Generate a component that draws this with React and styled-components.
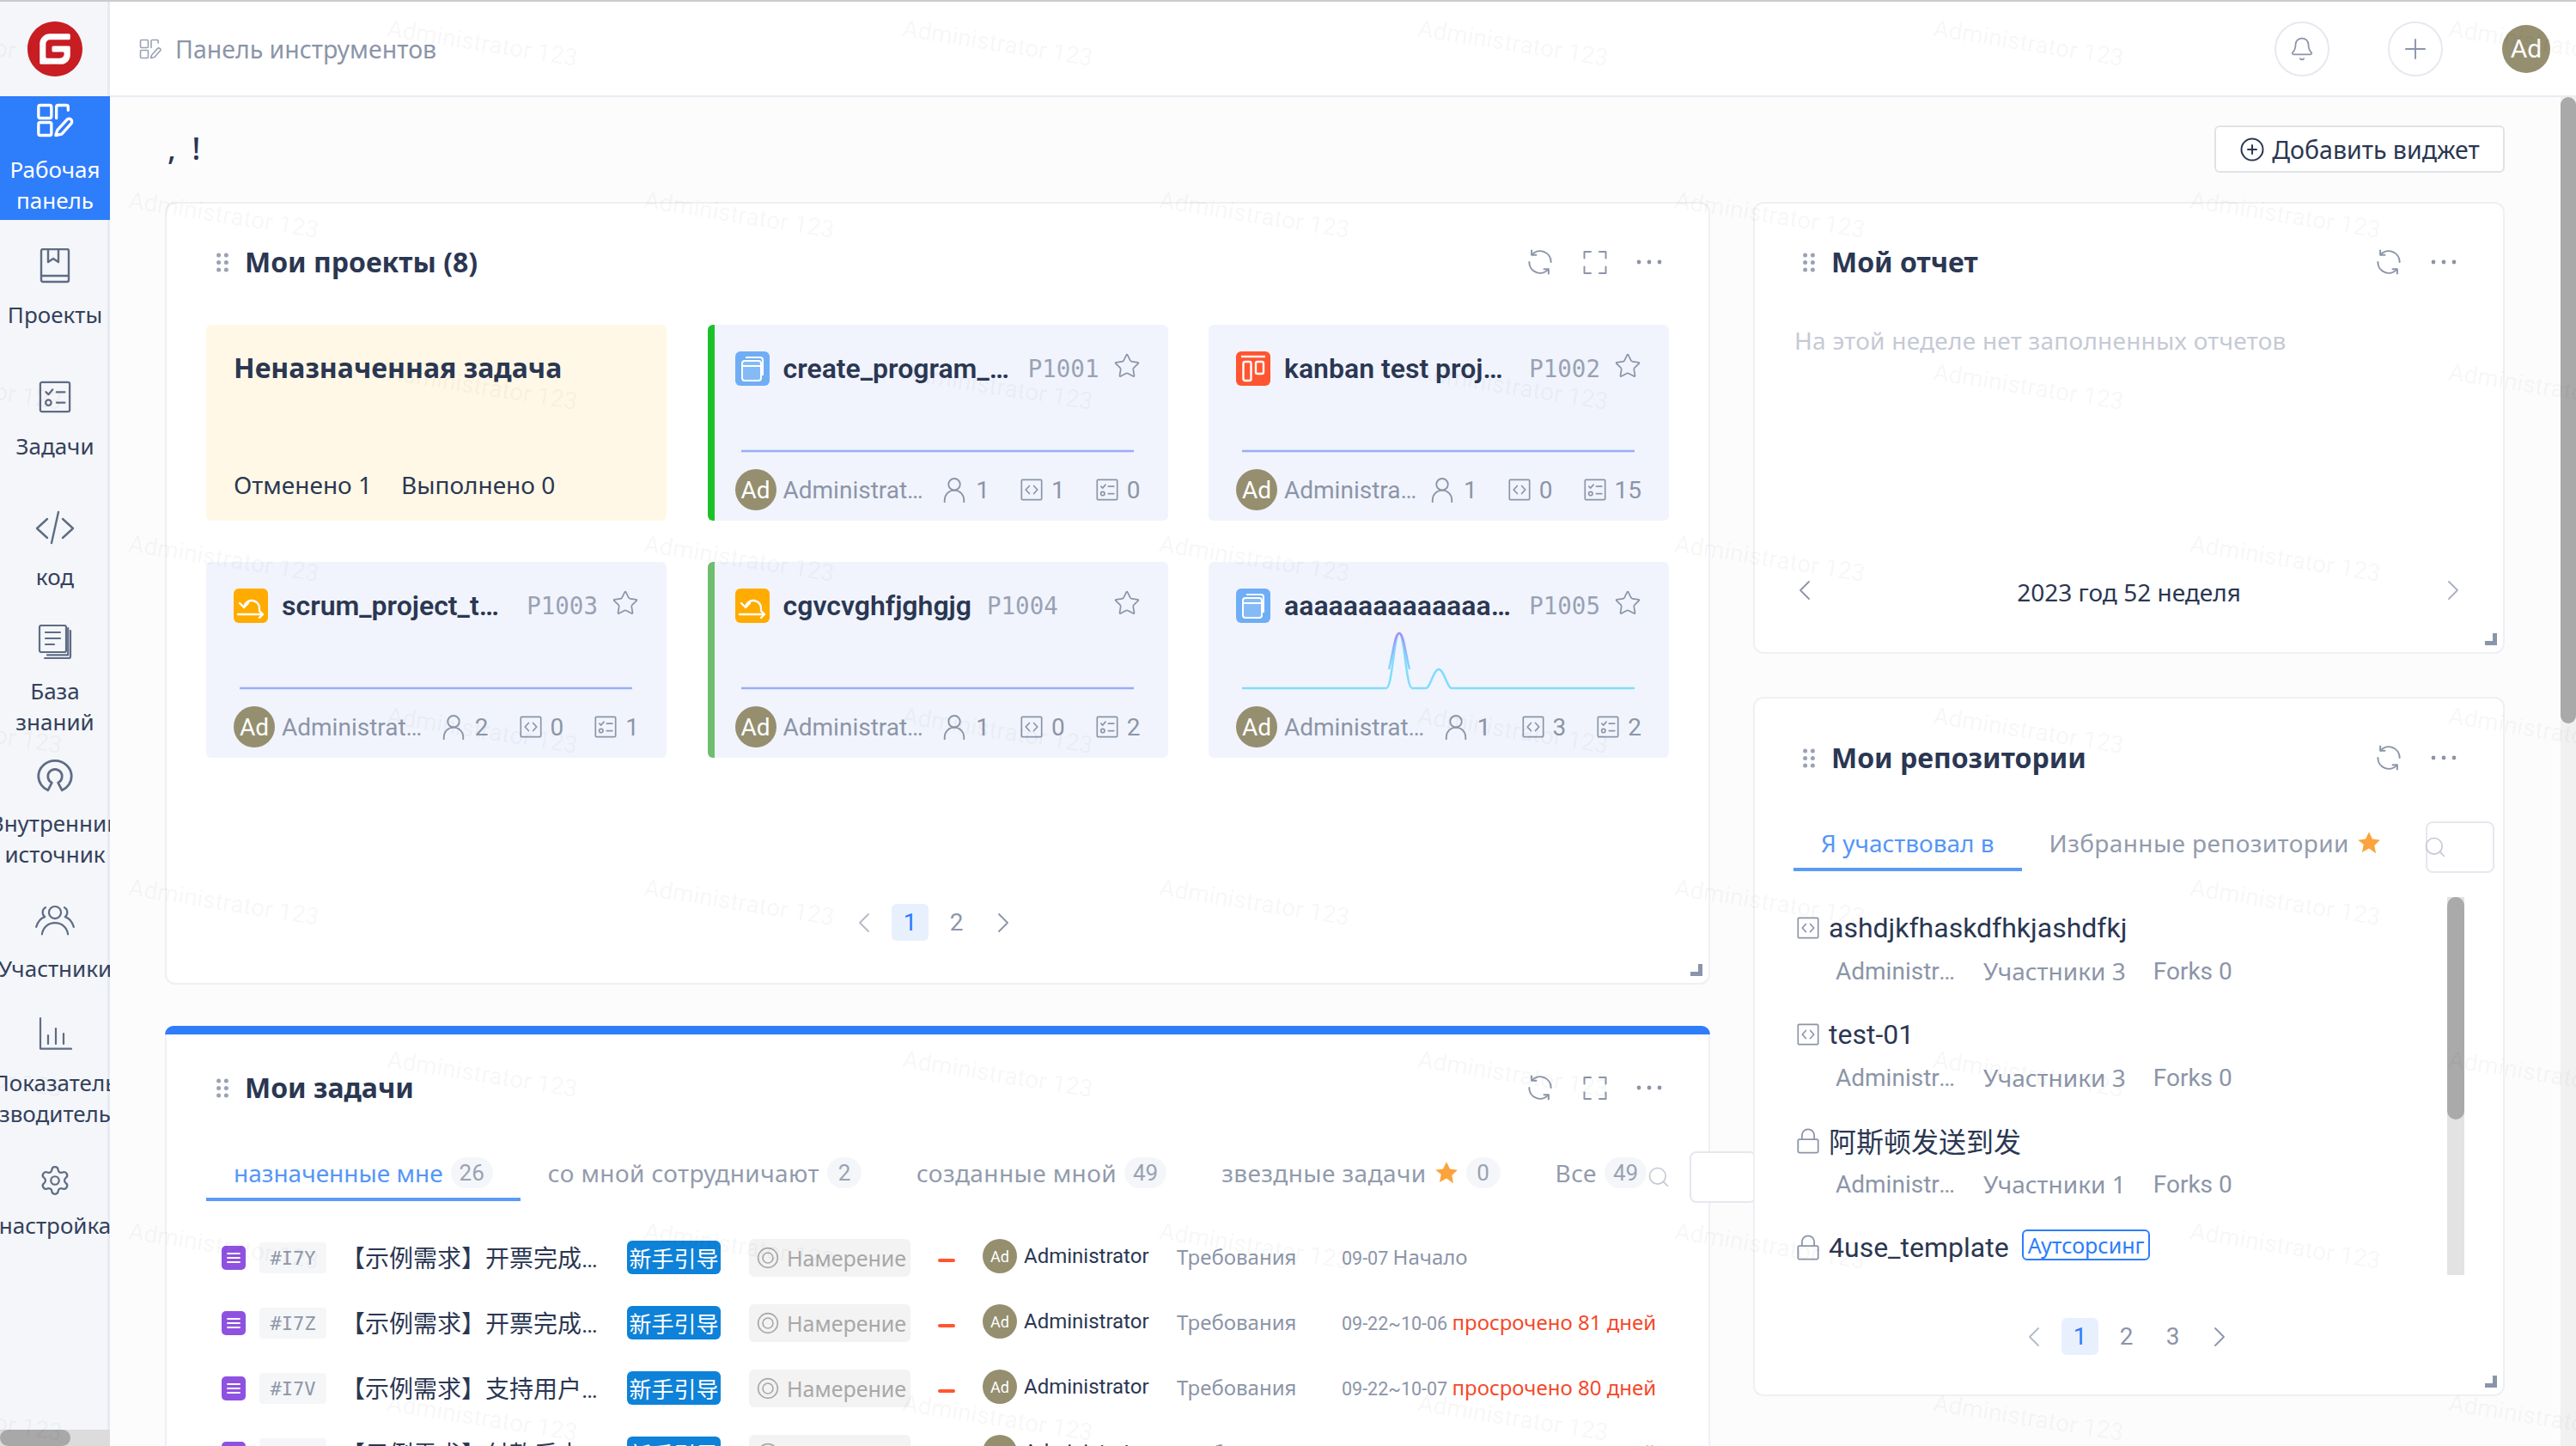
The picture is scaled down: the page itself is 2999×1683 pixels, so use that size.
import React from 'react';
import styled, { createGlobalStyle } from 'styled-components';
import { Settings, Bell, Plus, Star, Search, ChevronLeft, ChevronRight, CirclePlus } from 'lucide-react';

const FONT = `"Noto Sans", Roboto, "Noto Sans CJK SC", sans-serif`;
const LATIN = `Roboto, "Noto Sans", "Noto Sans CJK SC", sans-serif`;
const MONO = `"DejaVu Sans Mono", "Liberation Mono", monospace`;
const INK = '#2b3752';
const MUTED = '#8c95a8';
const BLUE = '#2e7dfb';

const Global = createGlobalStyle`
  html, body { margin: 0; padding: 0; background: #fcfcfd; }
  * { box-sizing: border-box; }
  body { font-family: ${FONT}; color: ${INK}; }
`;

const Root = styled.div`
  position: relative; width: 2999px; height: 1683px; overflow: hidden;
  display: flex; flex-direction: column; background: #fcfcfd;
`;
const TopLine = styled.div`height: 2px; background: #c9cbcd; flex: none;`;
const Body = styled.div`flex: 1; display: flex; min-height: 0;`;

/* Sidebar */
const Sidebar = styled.nav`
  position: relative; width: 128px; flex: none; background: #f4f6f9;
  border-right: 3px solid #e6ebf3; display: flex; flex-direction: column;
`;
const LogoBox = styled.div`
  height: 110px; margin-right: -3px; flex: none; display: flex; align-items: center; justify-content: center;
`;
const NavItem = styled.div`
  flex: none; width: 128px; margin-top: ${p => p.$mt || 0}px; overflow: hidden;
  display: flex; flex-direction: column; align-items: center;
  color: ${p => (p.$active ? '#fff' : '#34415c')};
  background: ${p => (p.$active ? BLUE : 'transparent')};
  padding: ${p => (p.$active ? '8px 0 3px' : '0')};
`;
const NavIcon = styled.div`
  height: 40px; display: flex; align-items: center; justify-content: center;
  color: ${p => (p.$active ? '#fff' : '#5f6c85')};
`;
const NavLabel = styled.div`
  margin: ${p => (p.$tight ? '14px 0 7px' : '19px 0 2px')}; width: 128px; font-size: 26px; line-height: 36px;
  white-space: nowrap; display: flex; flex-direction: column; align-items: center;
  span { display: block; }
`;
const HBar = styled.div`
  position: absolute; left: 0; right: -3px; bottom: 0; height: 19px; background: #dcdcdc;
`;
const HThumb = styled.div`width: 82px; height: 19px; border-radius: 10px; background: #a8a8a8;`;

/* Header */
const Main = styled.div`flex: 1; min-width: 0; display: flex; flex-direction: column;`;
const Header = styled.header`
  height: 111px; flex: none; background: #fff; border-bottom: 2px solid #e8ecf2;
  display: flex; align-items: center; padding: 0 30px 0 34px;
`;
const Crumb = styled.div`
  display: flex; align-items: center; gap: 16px; font-size: 28.5px; color: ${MUTED};
`;
const CrumbIcon = styled.span`display: flex; color: #9aa2b3;`;
const HeaderRight = styled.div`margin-left: auto; display: flex; align-items: center;`;
const RoundBtn = styled.div`
  width: 64px; height: 64px; border-radius: 50%; border: 2px solid #e5e9f0; margin-right: ${p => p.$mr}px;
  display: flex; align-items: center; justify-content: center; color: ${MUTED};
`;
const Avatar = styled.div`
  width: ${p => p.$s}px; height: ${p => p.$s}px; border-radius: 50%; background: #958f70; color: #fff; flex: none;
  font-family: ${LATIN};
  display: flex; align-items: center; justify-content: center; font-size: ${p => p.$f}px;
`;

/* Page */
const Scroller = styled.div`flex: 1; min-height: 0; display: flex;`;
const Content = styled.main`
  flex: 1; min-width: 0; padding: 33px 65px 0 64px; display: flex; flex-direction: column;
`;
const VScroll = styled.div`width: 18px; flex: none; background: #f1f1f1;`;
const VThumb = styled.div`height: 729px; border-radius: 9px; background: #a9a9a9;`;

const Toolbar = styled.div`height: 55px; flex: none; margin-bottom: 34px; display: flex; align-items: center; justify-content: space-between;`;
const Greeting = styled.div`font-size: 36px; font-weight: 500; white-space: pre; padding-left: 3px; margin-top: -2px;`;
const AddBtn = styled.div`
  width: 338px; height: 55px; border: 2px solid #dfe3e8; border-radius: 6px; background: #fff;
  display: flex; align-items: center; justify-content: center; gap: 8px; font-size: 28.5px; color: ${INK};
`;
const Columns = styled.div`display: flex; gap: 50px; align-items: flex-start;`;
const LeftCol = styled.div`width: 1799px; flex: none; display: flex; flex-direction: column; gap: 48px;`;
const RightCol = styled.div`width: 875px; flex: none; display: flex; flex-direction: column; gap: 50px;`;

const Card = styled.section`
  position: relative; height: ${p => p.$h}px; background: #fff; border: 2px solid #eef0f4; border-radius: 12px;
  display: flex; flex-direction: column;
  ${p => p.$accent ? `&::before { content: ''; position: absolute; left: -2px; right: -2px; top: -2px; height: 10px; background: ${BLUE}; border-radius: 10px 10px 0 0; }` : ''}
`;
const CardHead = styled.div`
  height: 60px; flex: none; margin-top: ${p => p.$mt}px; padding: 0 54px 0 ${p => p.$pl || 56}px;
  display: flex; align-items: center;
`;
const CardTitle = styled.h2`margin: -2px 0 0 19px; font-size: 32px; font-weight: 700; color: ${INK};`;
const HeadTools = styled.div`margin-left: auto; display: flex; align-items: center; gap: 33px; color: ${MUTED};`;
const Corner = styled.div`
  position: absolute; right: 7px; bottom: 8px; width: 14px; height: 14px;
  &::before { content: ''; position: absolute; left: 0; right: 0; bottom: 0; height: 5px; background: #8a95a9; }
  &::after { content: ''; position: absolute; top: 0; bottom: 0; right: 0; width: 5px; background: #8a95a9; }
`;

/* Projects */
const ProjectGrid = styled.div`
  margin: 43px 46px 0 46px; display: grid; grid-template-columns: repeat(3, 536px); grid-auto-rows: 228px;
  column-gap: 47.5px; row-gap: 48px;
`;
const ProjectCard = styled.div`
  background: #f1f4fd; border-radius: 6px; padding: 31px 16px 0 ${p => (p.$bar ? 24 : 32)}px;
  border-left: ${p => (p.$bar ? `8px solid ${p.$bar}` : 'none')};
  display: flex; flex-direction: column; font-family: ${LATIN};
`;
const ProjHead = styled.div`height: 40px; display: flex; align-items: center;`;
const ProjIcon = styled.div`
  width: 40px; height: 40px; border-radius: 6px; background: ${p => p.$bg}; flex: none;
  display: flex; align-items: center; justify-content: center; margin-right: 16px;
`;
const ProjName = styled.div`
  flex: 0 1 auto; min-width: 0; font-size: 32px; font-weight: 600; color: ${INK};
  white-space: nowrap; overflow: hidden; text-overflow: ellipsis;
`;
const ProjCode = styled.div`flex: none; margin-left: 18px; font-family: ${MONO}; font-size: 27.5px; color: #99a2b4;`;
const ProjStar = styled.div`flex: none; margin-left: auto; padding-left: 16px; padding-right: 16px; display: flex; color: #8c95a8; margin-top: -6px;`;
const Spark = styled.svg`display: block; margin: 4px 0 0 7px; width: 457px; height: 74px; flex: none; overflow: visible;`;
const ProjFoot = styled.div`margin-top: 19px; height: 48px; display: flex; align-items: center; color: ${MUTED}; font-size: 28px; padding-right: 16px;`;
const OwnerName = styled.div`flex: 1 1 0; min-width: 0; margin: 0 14px 0 8px; white-space: nowrap; overflow: hidden; text-overflow: ellipsis;`;
const Stat = styled.div`flex: none; display: flex; align-items: center; gap: 10px; margin-left: ${p => p.$ml || 0}px;`;

const UnassignedCard = styled.div`
  background: #fff8e6; border-radius: 6px; padding: 30px 32px 0; display: flex; flex-direction: column;
`;
const UnTitle = styled.div`font-size: 32px; font-weight: 700; color: ${INK}; line-height: 40px;`;
const UnFoot = styled.div`margin-top: auto; margin-bottom: 22px; display: flex; gap: 34px; font-size: 28px; line-height: 40px; color: ${INK};`;

const Pager = styled.div`
  margin-top: ${p => p.$mt}px; margin-left: ${p => p.$ml || 0}px; display: flex; justify-content: center; gap: ${p => p.$gap || 11}px; flex: none;
  font-family: ${LATIN};
`;
const PageItem = styled.div`
  width: 43px; height: 43px; border-radius: 6px; display: flex; align-items: center; justify-content: center;
  font-size: 28px; color: ${p => (p.$active ? BLUE : p.$off ? '#b4bac7' : MUTED)};
  background: ${p => (p.$active ? '#e8f0fe' : 'transparent')};
`;

/* Tabs */
const Tabs = styled.div`
  flex: none; display: flex; align-items: flex-start; margin-top: 44px; margin-left: ${p => p.$ml}px; padding-right: ${p => p.$pr || 0}px;
`;
const Tab = styled.div`
  flex: none; height: 58px; padding: 0 ${p => p.$pr ?? 32}px 4px 32px; display: flex; align-items: center; gap: 9px;
  font-size: 28px; white-space: nowrap; letter-spacing: ${p => (p.$active ? 0 : '0.4px')};
  color: ${p => (p.$active ? '#5596f7' : '#929bad')};
  border-bottom: 4px solid ${p => (p.$active ? '#5b9bf8' : 'transparent')};
`;
const Count = styled.span`
  min-width: 40px; height: 36px; padding: 0 10px; border-radius: 18px; background: #f4f6fa; color: #9aa2b3;
  display: inline-flex; align-items: center; justify-content: center; font-size: 26px; font-family: ${LATIN}; letter-spacing: 0;
`;
const SearchBox = styled.div`
  position: relative; flex: none; width: ${p => p.$w}px; height: 60px; margin-left: ${p => p.$ml}; background: #fff;
  border: 2px solid #e5e8ee; border-radius: 8px;
`;
const SearchGlyph = styled.div`
  position: absolute; left: -5px; top: 14px; color: #c3c8d2; display: flex;
`;
const TabSearchGlyph = styled.div`flex: none; display: flex; color: #c3c8d2; margin: 16px 0 0 0; width: 50px;`;

/* Task rows */
const TaskList = styled.div`margin-top: 26px; padding-left: 64px;`;
const TaskRow = styled.div`height: 76px; display: flex; align-items: center;`;
const TypeIcon = styled.div`
  width: 28px; height: 28px; flex: none; border-radius: 5px; background: #8f51e0; color: #fff;
  display: flex; align-items: center; justify-content: center;
`;
const TaskCode = styled.div`
  width: 78px; height: 36px; flex: none; margin-left: 16px; border-radius: 4px; background: #f5f6f8;
  font-family: ${MONO}; font-size: 22px; color: #8f97a8; display: flex; align-items: center; justify-content: center;
`;
const TaskTitle = styled.div`
  width: 325px; flex: none; margin: -2px 0 0 17px; font-size: 28px; color: ${INK}; font-family: Roboto, "Noto Sans CJK SC", sans-serif;
  white-space: nowrap; overflow: hidden; text-overflow: ellipsis;
`;
const GuideTag = styled.div`
  width: 109px; height: 39px; flex: none; margin-left: 8px; margin-top: -2px; border-radius: 6px; background: #0e82d8; color: #fff;
  font-size: 26px; font-family: "Noto Sans CJK SC", sans-serif; display: flex; align-items: center; justify-content: center;
`;
const StatusTag = styled.div`
  width: 188px; height: 44px; flex: none; margin-left: 33px; border-radius: 6px; background: #f3f3f3; color: #a8a8a8;
  font-size: 25px; display: flex; align-items: center; gap: 9px; padding-left: 9px; white-space: nowrap;
`;
const PriorityDash = styled.div`width: 20px; height: 4px; flex: none; margin: 6px 0 0 32px; border-radius: 2px; background: #ff5630;`;
const TaskOwner = styled.div`width: 178px; flex: none; margin-left: 8px; font-size: 24px; color: ${INK}; font-family: ${LATIN};`;
const TaskOwnerWrap = styled.div`display: flex; align-items: center; margin-left: 32px; margin-top: -4px; flex: none;`;
const TaskType = styled.div`width: 192px; flex: none; font-size: 24px; color: ${MUTED}; margin-top: -4px; white-space: nowrap;`;
const TaskDate = styled.div`flex: none; font-size: 21.5px; color: ${MUTED}; margin-top: -4px; white-space: pre; font-family: ${LATIN}; display: flex; align-items: baseline;`;
const DateWord = styled.span`font-family: ${FONT}; font-size: 24px;`;
const Late = styled.span`font-family: ${FONT}; font-size: 24px; color: #f5492a;`;

/* Report */
const EmptyText = styled.div`margin: 41px 0 0 46px; font-size: 28px; line-height: 40px; letter-spacing: 0.25px; color: #c5cad5;`;
const ReportFoot = styled.div`
  margin-top: auto; margin-bottom: 50px; padding: 0 50px; height: 40px; display: flex; align-items: center; justify-content: space-between;
  font-size: 28px; color: ${INK};
`;
const ChevronSlot = styled.div`display: flex; color: ${p => (p.$light ? '#a9b0bf' : MUTED)}; margin: -4px -12px 0;`;

/* Repos */
const RepoArea = styled.div`margin: 28px 45px 0 48px; height: 440px; display: flex; flex: none;`;
const RepoList = styled.div`flex: 1; min-width: 0; overflow: hidden; font-family: ${LATIN};`;
const RepoRow = styled.div`height: 124px; padding-top: 16px; flex: none;`;
const RepoName = styled.div`height: 40px; display: flex; align-items: center; gap: 12px; font-size: 32px; color: ${INK}; white-space: nowrap; padding-left: 1px;`;
const RepoIcon = styled.span`display: flex; color: ${MUTED}; margin-right: -1px;`;
const RepoCjk = styled.span`font-family: "Noto Sans CJK SC", sans-serif; margin-top: -2px;`;
const RepoTag = styled.span`
  margin-left: 3px; margin-top: -6px; height: 36px; padding: 0 5px; border: 2px solid ${BLUE}; border-radius: 6px; color: ${BLUE};
  font-size: 25px; display: inline-flex; align-items: center; font-family: ${FONT};
`;
const RepoMeta = styled.div`margin-top: 10px; padding-left: 46px; height: 40px; display: flex; align-items: center; gap: 32px; font-size: 28px; color: ${MUTED}; white-space: nowrap;`;
const RepoOwner = styled.div`width: 142px; margin-right: -2px; overflow: hidden; text-overflow: ellipsis;`;
const RepoMembers = styled.span`font-family: ${FONT};`;
const Track = styled.div`width: 20px; flex: none; background: #e3e3e3;`;
const Thumb = styled.div`height: 259px; border-radius: 10px; background: #aaa;`;

/* Watermark */
const Watermark = styled.div`
  position: absolute; inset: 0; overflow: hidden; pointer-events: none; z-index: 20; padding-top: 14px;
`;
const WmRow = styled.div`
  height: 200px; display: flex; margin-left: ${p => p.$ml}px; width: 4000px;
`;
const WmText = styled.div`
  width: 600px; flex: none; font-family: ${LATIN}; font-size: 28px; line-height: 36px; color: rgba(0, 0, 0, 0.045); white-space: nowrap;
  transform: rotate(9deg); transform-origin: 0 50%;
`;

/* Icons */
const Ico = styled.svg`
  display: block; flex: none; fill: none; stroke: currentColor; stroke-width: ${p => p.$sw || 2};
  stroke-linecap: round; stroke-linejoin: round;
`;
const I = ({ w, h, vb, sw, children }) => (
  <Ico width={w} height={h} viewBox={vb} $sw={sw}>{children}</Ico>
);

const Logo = () => (
  <svg width="64" height="64" viewBox="0 0 1024 1024">
    <circle cx="512" cy="512" r="440" fill="#fff" />
    <path fill="#c71d23" d="M512 1024C229.222 1024 0 794.778 0 512S229.222 0 512 0s512 229.222 512 512-229.222 512-512 512z m259.149-568.883h-290.74a25.293 25.293 0 0 0-25.292 25.293l-0.026 63.206c0 13.952 11.315 25.293 25.267 25.293h177.024c13.978 0 25.293 11.315 25.293 25.267v12.646a75.853 75.853 0 0 1-75.853 75.853h-240.23a25.293 25.293 0 0 1-25.267-25.293V417.203a75.853 75.853 0 0 1 75.827-75.853h353.946a25.293 25.293 0 0 0 25.267-25.292l0.077-63.207a25.293 25.293 0 0 0-25.268-25.293H417.152a189.62 189.62 0 0 0-189.62 189.645V771.15c0 13.977 11.316 25.293 25.294 25.293h372.94a170.65 170.65 0 0 0 170.65-170.65V480.384a25.293 25.293 0 0 0-25.293-25.267z" />
  </svg>
);
const DashIcon = ({ w = 44, h = 40, sw = 2 }) => (
  <I w={w} h={h} vb="0 0 26 24" sw={sw}>
    <rect x="1.5" y="1.5" width="9" height="9" rx="1.2" />
    <rect x="1.5" y="13.5" width="9" height="9" rx="1.2" />
    <path d="M14 10.5V2.7A1.2 1.2 0 0 1 15.2 1.5H21a1.2 1.2 0 0 1 1.2 1.2V5" />
    <path d="M13.5 22.5l4.2-.8 6.6-7.4a2 2 0 0 0-3-2.7L14.6 19z" />
  </I>
);
const BookIcon = () => (
  <I w={36} h={42} vb="0 0 18 21" sw={1.2}>
    <rect x="1" y="1" width="16" height="19" rx="1" />
    <path d="M1 16.5h16M5 1v7.5l3-2 3 2V1" />
  </I>
);
const TasksIcon = ({ s = 38, sw = 1.2 }) => (
  <I w={s} h={s} vb="0 0 20 20" sw={sw}>
    <rect x="1" y="1" width="18" height="18" rx="1" />
    <path d="M4.5 7l1.5 1.5 2.5-3M11 7h5M11 13.5h5" />
    <circle cx="6" cy="13.5" r="1.7" />
  </I>
);
const CodeNavIcon = () => (
  <I w={46} h={40} vb="0 0 23 20" sw={1.2}>
    <path d="M7 5l-6 5.5L7 16M16 5l6 5.5L16 16M13.5 1l-4 18" />
  </I>
);
const DocsIcon = () => (
  <I w={40} h={43} vb="0 0 20 21.5" sw={1.1}>
    <rect x="1" y="1" width="15.5" height="15.5" rx="1" />
    <path d="M4.5 5h8.5M4.5 8.5h8.5M4.5 12h5M19 4v15a1 1 0 0 1-1 1H4" />
    <path d="M17.6 2.5V18.2H5.5" />
  </I>
);
const ArchIcon = () => (
  <I w={44} h={41} vb="0 0 24 22" sw={1.5}>
    <path d="M7.5 21L10 16.2A4.5 4.5 0 1 1 14 16.2L16.5 21C20 19.5 22.5 16 22.5 12A10.5 9.8 0 0 0 1.5 12C1.5 16 4 19.5 7.5 21Z" />
  </I>
);
const MembersIcon = () => (
  <I w={48} h={37} vb="0 0 28 22" sw={1.3}>
    <circle cx="14" cy="6" r="4.2" />
    <path d="M5 21c.8-5 4.5-7.8 9-7.8s8.2 2.8 9 7.8" />
    <path d="M7.5 2.5C5 3.5 4.8 7.5 7 9C4 10 2 12.5 1 16" />
    <path d="M20.5 2.5C23 3.5 23.2 7.5 21 9C24 10 26 12.5 27 16" />
  </I>
);
const ChartIcon = () => (
  <I w={40} h={40} vb="0 0 20 20" sw={1.1}>
    <path d="M1.5 1v17.8h18M6 11v5M10.5 7v9M15 10v6" />
  </I>
);
const Refresh = () => (
  <I w={32} h={32} vb="0 0 24 24" sw={1.5}>
    <path d="M5 5.5A9.5 9.5 0 0 1 21.5 12M19 18.5A9.5 9.5 0 0 1 2.5 12" />
    <path d="M4.6 1.8v4h4M19.4 22.2v-4h-4" />
  </I>
);
const Expand = () => (
  <I w={30} h={31} vb="0 0 24 24" sw={1.6}>
    <path d="M2 8V2h6M16 2h6v6M22 16v6h-6M8 22H2v-6" />
  </I>
);
const Dots = () => (
  <svg width="30" height="6" viewBox="0 0 30 6" fill="currentColor">
    <circle cx="3" cy="3" r="2.4" /><circle cx="15" cy="3" r="2.4" /><circle cx="27" cy="3" r="2.4" />
  </svg>
);
const GripSvg = styled.svg`flex: none; fill: #9aa2b3;`;
const Grip = () => (
  <GripSvg width="14" height="23" viewBox="0 0 14 23">
    {[3, 11.5, 20].map(y => (
      <React.Fragment key={y}><circle cx="2.6" cy={y} r="2.5" /><circle cx="11.4" cy={y} r="2.5" /></React.Fragment>
    ))}
  </GripSvg>
);
const WindowGlyph = () => (
  <svg width="28" height="30" viewBox="0 0 28 30" fill="none" stroke="#fff" strokeWidth="2">
    <rect x="2" y="6" width="22" height="23" rx="3" fill="rgba(255,255,255,.15)" />
    <path d="M2 12h22M6 2h17a3 3 0 0 1 3 3v18" />
  </svg>
);
const KanbanGlyph = () => (
  <svg width="30" height="32" viewBox="0 0 30 32" fill="none" stroke="#fff" strokeWidth="2.4">
    <path d="M1 2h28" />
    <rect x="3.5" y="8" width="9" height="22" rx="2" />
    <rect x="18" y="8" width="9" height="14" rx="2" />
  </svg>
);
const ScrumGlyph = () => (
  <svg width="34" height="30" viewBox="0 0 34 30" fill="none" stroke="#fff" strokeWidth="2.4" strokeLinecap="round" strokeLinejoin="round">
    <path d="M9 17a9 9 0 1 1 18 2" />
    <path d="M4 12l5 5 5-5" />
    <path d="M2 25h29M27 21l4 4-4 4" />
  </svg>
);
const PersonIcon = () => (
  <I w={30} h={30} vb="0 0 24 24" sw={1.5}>
    <circle cx="12" cy="7" r="5.4" />
    <path d="M3 23.5v-2a9 9 0 0 1 18 0v2" />
  </I>
);
const CodeBox = ({ s = 26 }) => (
  <I w={s} h={s} vb="0 0 20 20" sw={1.3}>
    <rect x="1" y="1" width="18" height="18" rx="1" />
    <path d="M8 6.5L4.8 10 8 13.5M12 6.5l3.2 3.5-3.2 3.5" />
  </I>
);
const LockIcon = () => (
  <I w={26} h={30} vb="0 0 20 23" sw={1.4}>
    <rect x="1" y="10" width="18" height="12" rx="1.2" />
    <path d="M4.5 10V6.5a5.5 5.5 0 0 1 11 0V10" />
  </I>
);
const TargetIcon = () => (
  <I w={26} h={26} vb="0 0 24 24" sw={1.5}>
    <circle cx="12" cy="12" r="10.5" /><circle cx="12" cy="12" r="5.5" />
  </I>
);
const LinesIcon = () => (
  <I w={16} h={14} vb="0 0 16 14" sw={1.8}>
    <path d="M1 2h14M1 7h14M1 12h14" />
  </I>
);
const StarSvg = styled.svg`flex: none; fill: #fba33c;`;
const SolidStar = () => (
  <StarSvg width="28" height="28" viewBox="0 0 24 24">
    <path d="M12 1l3.4 7.2 7.6 1-5.6 5.4 1.5 7.8L12 17.6 5.1 21.4l1.5-7.8L1 9.2l7.6-1z" />
  </StarSvg>
);

const NAV = [
  { icon: <DashIcon />, lines: ['Рабочая', 'панель'], active: true },
  { icon: <BookIcon />, lines: ['Проекты'], mt: 33 },
  { icon: <TasksIcon />, lines: ['Задачи'], mt: 56 },
  { icon: <CodeNavIcon />, lines: ['код'], mt: 55 },
  { icon: <DocsIcon />, lines: ['База', 'знаний'], mt: 36 },
  { icon: <ArchIcon />, lines: ['Внутренний', 'источник'], mt: 21 },
  { icon: <MembersIcon />, lines: ['Участники'], mt: 36 },
  { icon: <ChartIcon />, lines: ['Показатель', 'зводитель'], mt: 36 },
  { icon: <Settings size={38} strokeWidth={1.4} />, lines: ['настройка'], mt: 38, tight: true },
];

const PROJECTS = [
  { bar: '#1ec02a', bg: '#6faef5', glyph: <WindowGlyph />, name: 'create_program_test', code: 'P1001', stats: [1, 1, 0] },
  { bg: '#ff5530', glyph: <KanbanGlyph />, name: 'kanban test project', code: 'P1002', stats: [1, 0, 15] },
  { bg: '#ffab00', glyph: <ScrumGlyph />, name: 'scrum_project_test', code: 'P1003', stats: [2, 0, 1] },
  { bar: '#6fbe6f', bg: '#ffab00', glyph: <ScrumGlyph />, name: 'cgvcvghfjghgjg', code: 'P1004', stats: [1, 0, 2] },
  { bg: '#6faef5', glyph: <WindowGlyph />, name: 'aaaaaaaaaaaaaaaaaaaa', code: 'P1005', stats: [1, 3, 2], spark: true },
];

const TABS = [
  ['назначенные мне', 26, true],
  ['со мной сотрудничают', 2],
  ['созданные мной', 49],
];
const TASKS = [
  ['#I7Y', '【示例需求】开票完成前的处理流程', '09-07 ', '', 'Начало'],
  ['#I7Z', '【示例需求】开票完成后的处理流程', '09-22~10-06 ', 'просрочено 81 дней'],
  ['#I7V', '【示例需求】支持用户在线申请开票', '09-22~10-07 ', 'просрочено 80 дней'],
  ['#I7U', '【示例需求】付款后支持申请开票流程', '09-22~10-01 ', 'просрочено 81 дней'],
];
const REPOS = [
  { name: 'ashdjkfhaskdfhkjashdfkj', members: 3 },
  { name: 'test-01', members: 3 },
  { name: '阿斯顿发送到发', lock: true, cjk: true, members: 1 },
  { name: '4use_template', lock: true, members: 1, tag: 'Аутсорсинг' },
];

const Project = ({ p }) => (
  <ProjectCard $bar={p.bar}>
    <ProjHead>
      <ProjIcon $bg={p.bg}>{p.glyph}</ProjIcon>
      <ProjName>{p.name}</ProjName>
      <ProjCode>{p.code}</ProjCode>
      <ProjStar><Star size={32} strokeWidth={1.3} /></ProjStar>
    </ProjHead>
    <Spark viewBox="0 0 457 74">
      <defs>
        <linearGradient id="spk" x1="0" y1="0" x2="0" y2="1">
          <stop offset="0" stopColor="#a78bfa" /><stop offset="1" stopColor="#7fdcfb" />
        </linearGradient>
      </defs>
      {p.spark ? (
        <>
          <path d="M0 72H168C175 72 177 8 183 8S191 72 198 72H214C219 72 223 50 229 50S239 72 244 72H457" fill="none" stroke="#82dcfb" strokeWidth="2.5" />
          <path d="M171 50C176 30 178 8 183 8S190 30 195 50" fill="none" stroke="url(#spk)" strokeWidth="2.5" />
        </>
      ) : (
        <path d="M0 72H457" stroke="#98adf8" strokeWidth="2.5" />
      )}
    </Spark>
    <ProjFoot>
      <Avatar $s={48} $f={28}>Ad</Avatar>
      <OwnerName>Administrator 123</OwnerName>
      <Stat><PersonIcon />{p.stats[0]}</Stat>
      <Stat $ml={36}><CodeBox />{p.stats[1]}</Stat>
      <Stat $ml={36}><TasksIcon s={26} sw={1.3} />{p.stats[2]}</Stat>
    </ProjFoot>
  </ProjectCard>
);

export default function App() {
  const wmRows = Array.from({ length: 9 }, (_, i) => i);
  return (
    <Root>
      <Global />
      <TopLine />
      <Body>
        <Sidebar>
          <LogoBox><Logo /></LogoBox>
          {NAV.map(n => (
            <NavItem key={n.lines[0]} $active={n.active} $mt={n.mt}>
              <NavIcon $active={n.active}>{n.icon}</NavIcon>
              <NavLabel $tight={n.tight}>{n.lines.map(l => <span key={l}>{l}</span>)}</NavLabel>
            </NavItem>
          ))}
          <HBar><HThumb /></HBar>
        </Sidebar>
        <Main>
          <Header>
            <Crumb><CrumbIcon><DashIcon w={26} h={24} sw={1.6} /></CrumbIcon>Панель инструментов</Crumb>
            <HeaderRight>
              <RoundBtn $mr={68}><Bell size={30} strokeWidth={1.4} /></RoundBtn>
              <RoundBtn $mr={69}><Plus size={38} strokeWidth={1.2} /></RoundBtn>
              <Avatar $s={56} $f={30}>Ad</Avatar>
            </HeaderRight>
          </Header>
          <Scroller>
            <Content>
              <Toolbar>
                <Greeting>{',  !'}</Greeting>
                <AddBtn><CirclePlus size={30} strokeWidth={1.6} />Добавить виджет</AddBtn>
              </Toolbar>
              <Columns>
                <LeftCol>
                  <Card $h={911}>
                    <CardHead $mt={38} $pl={58}>
                      <Grip /><CardTitle>Мои проекты (8)</CardTitle>
                      <HeadTools><Refresh /><Expand /><Dots /></HeadTools>
                    </CardHead>
                    <ProjectGrid>
                      <UnassignedCard>
                        <UnTitle>Неназначенная задача</UnTitle>
                        <UnFoot><span>Отменено 1</span><span>Выполнено 0</span></UnFoot>
                      </UnassignedCard>
                      {PROJECTS.map(p => <Project key={p.code} p={p} />)}
                    </ProjectGrid>
                    <Pager $mt={170} $ml={-10} $gap={11}>
                      <PageItem $off><ChevronLeft size={40} strokeWidth={1.1} /></PageItem>
                      <PageItem $active>1</PageItem>
                      <PageItem>2</PageItem>
                      <PageItem><ChevronRight size={40} strokeWidth={1.1} /></PageItem>
                    </Pager>
                    <Corner />
                  </Card>
                  <Card $h={560} $accent>
                    <CardHead $mt={40} $pl={58}>
                      <Grip /><CardTitle>Мои задачи</CardTitle>
                      <HeadTools><Refresh /><Expand /><Dots /></HeadTools>
                    </CardHead>
                    <Tabs $ml={46}>
                      {TABS.map(([t, c, a]) => (
                        <Tab key={t} $active={a}>{t}<Count>{c}</Count></Tab>
                      ))}
                      <Tab>звездные задачи<SolidStar /><Count>0</Count></Tab>
                      <Tab $pr={0}>Все<Count>49</Count></Tab>
                      <TabSearchGlyph><Search size={28} strokeWidth={1.4} /></TabSearchGlyph>
                      <SearchBox $w={78} $ml="0">&nbsp;</SearchBox>
                    </Tabs>
                    <TaskList>
                      {TASKS.map(t => (
                        <TaskRow key={t[0]}>
                          <TypeIcon><LinesIcon /></TypeIcon>
                          <TaskCode>{t[0]}</TaskCode>
                          <TaskTitle>{t[1]}</TaskTitle>
                          <GuideTag>新手引导</GuideTag>
                          <StatusTag><TargetIcon />Намерение</StatusTag>
                          <PriorityDash />
                          <TaskOwnerWrap>
                            <Avatar $s={40} $f={18}>Ad</Avatar>
                            <TaskOwner>Administrator</TaskOwner>
                          </TaskOwnerWrap>
                          <TaskType>Требования</TaskType>
                          <TaskDate>{t[2]}{t[4] && <DateWord>{t[4]}</DateWord>}{t[3] && <Late>{t[3]}</Late>}</TaskDate>
                        </TaskRow>
                      ))}
                    </TaskList>
                  </Card>
                </LeftCol>
                <RightCol>
                  <Card $h={526}>
                    <CardHead $mt={38}>
                      <Grip /><CardTitle>Мой отчет</CardTitle>
                      <HeadTools><Refresh /><Dots /></HeadTools>
                    </CardHead>
                    <EmptyText>На этой неделе нет заполненных отчетов</EmptyText>
                    <ReportFoot>
                      <ChevronSlot><ChevronLeft size={40} strokeWidth={1.1} /></ChevronSlot>
                      <span>2023 год 52 неделя</span>
                      <ChevronSlot $light><ChevronRight size={40} strokeWidth={1.1} /></ChevronSlot>
                    </ReportFoot>
                    <Corner />
                  </Card>
                  <Card $h={814}>
                    <CardHead $mt={39}>
                      <Grip /><CardTitle>Мои репозитории</CardTitle>
                      <HeadTools><Refresh /><Dots /></HeadTools>
                    </CardHead>
                    <Tabs $ml={45} $pr={10}>
                      <Tab $active>Я участвовал в</Tab>
                      <Tab>Избранные репозитории<SolidStar /></Tab>
                      <SearchBox $w={80} $ml="auto"><SearchGlyph><Search size={28} strokeWidth={1.4} /></SearchGlyph></SearchBox>
                    </Tabs>
                    <RepoArea>
                      <RepoList>
                        {REPOS.map(r => (
                          <RepoRow key={r.name}>
                            <RepoName>
                              <RepoIcon>{r.lock ? <LockIcon /> : <CodeBox />}</RepoIcon>
                              {r.cjk ? <RepoCjk>{r.name}</RepoCjk> : r.name}
                              {r.tag && <RepoTag>{r.tag}</RepoTag>}
                            </RepoName>
                            <RepoMeta>
                              <RepoOwner>Administrator 123</RepoOwner>
                              <RepoMembers>Участники {r.members}</RepoMembers>
                              <span>Forks 0</span>
                            </RepoMeta>
                          </RepoRow>
                        ))}
                      </RepoList>
                      <Track><Thumb /></Track>
                    </RepoArea>
                    <Pager $mt={50} $ml={-6}>
                      <PageItem $off><ChevronLeft size={40} strokeWidth={1.1} /></PageItem>
                      <PageItem $active>1</PageItem>
                      <PageItem>2</PageItem>
                      <PageItem>3</PageItem>
                      <PageItem><ChevronRight size={40} strokeWidth={1.1} /></PageItem>
                    </Pager>
                    <Corner />
                  </Card>
                </RightCol>
              </Columns>
            </Content>
            <VScroll><VThumb /></VScroll>
          </Scroller>
        </Main>
      </Body>
      <Watermark>
        {wmRows.map(i => (
          <WmRow key={i} $ml={i % 2 ? -463 : -162}>
            {Array.from({ length: 7 }, (_, j) => <WmText key={j}>Administrator 123</WmText>)}
          </WmRow>
        ))}
      </Watermark>
    </Root>
  );
}
